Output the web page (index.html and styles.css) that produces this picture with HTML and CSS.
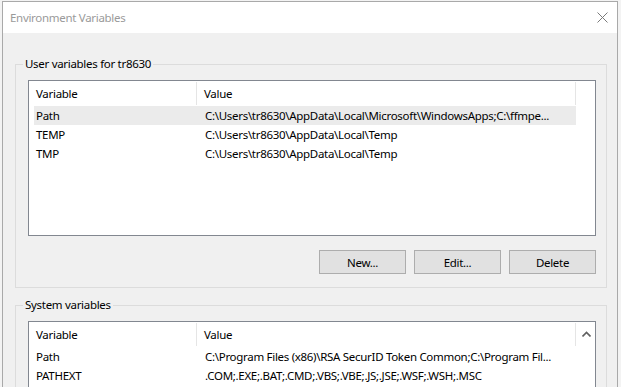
FILE: index.html
```html
<!DOCTYPE html>
<html lang="en">
<head>
  <meta charset="UTF-8" />
  <title>Environment Variables</title>
  <link rel="stylesheet" href="styles.css">
</head>
<body>
  <div class="desktop">
    <div class="dialog">
      <!-- title bar -->
      <div class="titlebar">
        <span class="title">Environment Variables</span>
        <svg class="close" width="11" height="11" viewBox="0 0 11 11">
          <path d="M0.5 0.5 L10.5 10.5 M10.5 0.5 L0.5 10.5" stroke="#7a7a7a" stroke-width="1" fill="none" />
        </svg>
      </div>

      <div class="content">
        <!-- user variables -->
        <fieldset class="group">
          <legend>User variables for tr8630</legend>
          <div class="listview">
            <div class="lv-head">
              <div class="hcell col-var">Variable</div>
              <div class="hcell col-val">Value</div>
            </div>
            <div class="lv-row selected">
              <div class="cell col-var">Path</div>
              <div class="cell col-val">C:\Users\tr8630\AppData\Local\Microsoft\WindowsApps;C:\ffmpe...</div>
            </div>
            <div class="lv-row">
              <div class="cell col-var">TEMP</div>
              <div class="cell col-val">C:\Users\tr8630\AppData\Local\Temp</div>
            </div>
            <div class="lv-row">
              <div class="cell col-var">TMP</div>
              <div class="cell col-val">C:\Users\tr8630\AppData\Local\Temp</div>
            </div>
          </div>
          <div class="buttons">
            <button class="btn">New...</button>
            <button class="btn">Edit...</button>
            <button class="btn">Delete</button>
          </div>
        </fieldset>

        <!-- system variables -->
        <fieldset class="group">
          <legend>System variables</legend>
          <div class="listview system">
            <div class="lv-body">
              <div class="lv-head">
                <div class="hcell col-var">Variable</div>
                <div class="hcell col-val">Value</div>
              </div>
              <div class="lv-row">
                <div class="cell col-var">Path</div>
                <div class="cell col-val">C:\Program Files (x86)\RSA SecurID Token Common;C:\Program Fil...</div>
              </div>
              <div class="lv-row">
                <div class="cell col-var">PATHEXT</div>
                <div class="cell col-val">.COM;.EXE;.BAT;.CMD;.VBS;.VBE;.JS;.JSE;.WSF;.WSH;.MSC</div>
              </div>
            </div>
            <div class="scrollbar">
              <svg width="9" height="6" viewBox="0 0 9 6">
                <path d="M0.5 5.5 L4.5 1.5 L8.5 5.5" stroke="#606060" stroke-width="1.6" fill="none" />
              </svg>
            </div>
          </div>
        </fieldset>
      </div>
    </div>
  </div>
</body>
</html>
```

FILE: styles.css
```css
body {
  margin: 0;
  padding: 0;
  font-family: "Segoe UI", "Noto Sans", sans-serif;
  font-size: 11.5px;
  letter-spacing: -0.3px;
  color: #000;
  background-color: #f0f0f0;
  overflow: hidden;
}

.desktop {
  width: 621px;
  height: 387px;
  overflow: hidden;
  background-color: #f3f3f3;
}

.dialog {
  margin: 1px 0 0 2px;
  width: 614px;
  height: 600px;
  border: 1px solid #a9a9a9;
  background-color: #f0f0f0;
}

.titlebar {
  height: 31px;
  background-color: #fff;
  display: flex;
  align-items: center;
  justify-content: space-between;
  padding: 0 9px 0 7px;
}

.title {
  color: #9a9a9a;
}

.close {
  display: block;
  margin-top: -1px;
}

.content {
  padding: 23px 10px 0 12px;
}

/* group boxes */
.group {
  margin: 0 0 9px 0;
  padding: 8px 10px 13px 12px;
  border: 1px solid #dcdcdc;
  min-width: 0;
}

.group legend {
  margin-left: -5px;
  padding: 0 2px;
  line-height: 16px;
}

/* list views */
.listview {
  height: 154px;
  border: 1px solid #828790;
  background-color: #fff;
  overflow: hidden;
}

.listview.system {
  display: flex;
}

.lv-body {
  flex: 1;
  min-width: 0;
}

.lv-head {
  display: flex;
  width: 547px;
  height: 25px;
}

.hcell {
  line-height: 23px;
  border-right: 1px solid #e5e5e5;
  margin-top: 1px;
  height: 23px;
}

.hcell.col-var {
  width: 160px;
  padding-left: 7px;
}

.hcell.col-val {
  width: 371px;
  padding-left: 7px;
}

.lv-row {
  display: flex;
  height: 19px;
  line-height: 19px;
  margin-left: 5px;
  width: 542px;
}

.lv-row.selected {
  background-color: #ebebeb;
}

.cell {
  white-space: nowrap;
}

.cell.col-var {
  width: 161px;
  padding-left: 2px;
}

.cell.col-val {
  width: 368px;
  padding-left: 8px;
  padding-right: 3px;
}

.scrollbar {
  width: 18px;
  display: flex;
  justify-content: center;
  padding-top: 9px;
}

.scrollbar svg {
  display: block;
}

/* buttons */
.buttons {
  display: flex;
  justify-content: flex-end;
  gap: 8px;
  margin-top: 14px;
}

.btn {
  width: 87px;
  height: 24px;
  padding: 0;
  background-color: #e1e1e1;
  border: 1px solid #adadad;
  border-radius: 0;
  font-family: inherit;
  font-size: inherit;
  letter-spacing: inherit;
  color: #000;
}
```
